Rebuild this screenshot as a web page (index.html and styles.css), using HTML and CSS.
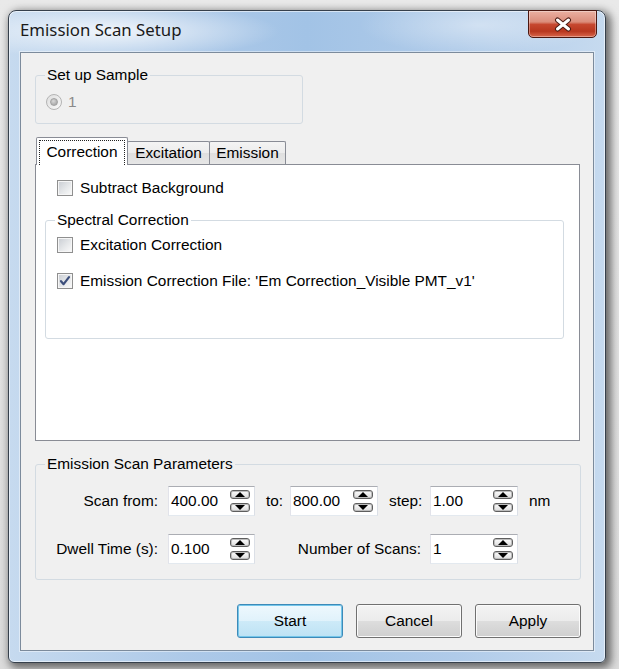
FILE: index.html
```html
<!DOCTYPE html>
<html lang="en">
<head>
<meta charset="utf-8">
<title>Emission Scan Setup</title>
<link rel="stylesheet" href="styles.css">
</head>
<body>
<div class="window">
  <div class="titlebar">
    <span class="title">Emission Scan Setup</span>
    <div class="close-btn">
      <svg width="20" height="15" viewBox="0 0 20 15"><path d="M4.5 3 L15.5 12 M15.5 3 L4.5 12" stroke="#4a1a12" stroke-width="5" stroke-linecap="round"/><path d="M4.5 3 L15.5 12 M15.5 3 L4.5 12" stroke="#ffffff" stroke-width="3" stroke-linecap="round"/></svg>
    </div>
  </div>
  <div class="client">
    <fieldset class="group group-sample">
      <legend>Set up Sample</legend>
      <div class="option disabled"><span class="radio"><span class="radio-dot"></span></span><span>1</span></div>
    </fieldset>

    <div class="tabs">
      <div class="tabstrip">
        <div class="tab tab-active"><span class="focus-rect">Correction</span></div>
        <div class="tab tab-exc">Excitation</div>
        <div class="tab tab-em">Emission</div>
      </div>
      <div class="tabpanel">
        <div class="option option-top"><span class="checkbox"></span><span>Subtract Background</span></div>
        <fieldset class="group group-spectral">
          <legend>Spectral Correction</legend>
          <div class="option"><span class="checkbox"></span><span>Excitation Correction</span></div>
          <div class="option option-gap"><span class="checkbox"><svg width="14" height="14" viewBox="0 0 14 14"><path d="M3 7.2 L5.6 10.2 L11 3.2" fill="none" stroke="#3d4f7c" stroke-width="2.2" stroke-linecap="round" stroke-linejoin="round"/></svg></span><span>Emission Correction File: 'Em Correction_Visible PMT_v1'</span></div>
        </fieldset>
      </div>
    </div>

    <fieldset class="group group-params">
      <legend>Emission Scan Parameters</legend>
      <div class="param-grid">
        <span class="lbl lbl-first">Scan from:</span>
        <div class="spin"><span class="spin-value">400.00</span><span class="spin-buttons"><span class="spin-btn"><span class="tri-up"></span></span><span class="spin-btn"><span class="tri-down"></span></span></span></div>
        <span class="lbl lbl-mid">to:</span>
        <div class="spin"><span class="spin-value">800.00</span><span class="spin-buttons"><span class="spin-btn"><span class="tri-up"></span></span><span class="spin-btn"><span class="tri-down"></span></span></span></div>
        <span class="lbl lbl-mid">step:</span>
        <div class="spin"><span class="spin-value">1.00</span><span class="spin-buttons"><span class="spin-btn"><span class="tri-up"></span></span><span class="spin-btn"><span class="tri-down"></span></span></span></div>
        <span class="lbl lbl-mid">nm</span>

        <span class="lbl lbl-first">Dwell Time (s):</span>
        <div class="spin"><span class="spin-value">0.100</span><span class="spin-buttons"><span class="spin-btn"><span class="tri-up"></span></span><span class="spin-btn"><span class="tri-down"></span></span></span></div>
        <span class="lbl lbl-span">Number of Scans:</span>
        <div class="spin spin-last"><span class="spin-value">1</span><span class="spin-buttons"><span class="spin-btn"><span class="tri-up"></span></span><span class="spin-btn"><span class="tri-down"></span></span></span></div>
      </div>
    </fieldset>

    <div class="buttons">
      <button class="btn btn-default">Start</button>
      <button class="btn">Cancel</button>
      <button class="btn">Apply</button>
    </div>
  </div>
</div>
</body>
</html>
```

FILE: styles.css
```css
* { box-sizing: border-box; }
html, body { margin: 0; padding: 0; }
body {
  width: 619px;
  height: 669px;
  overflow: hidden;
  padding: 10px 0 0 8px;
  background: linear-gradient(180deg, #e9e9e9 0%, #dcdcdc 100%);
  font-family: "Liberation Sans", Arial, sans-serif;
  font-size: 15.4px;
  color: #000;
}

.window {
  width: 598px;
  height: 653px;
  border: 1px solid #36404c;
  border-radius: 8px 8px 6px 6px;
  padding: 0 11px 11px 11px;
  display: flex;
  flex-direction: column;
  background:
    radial-gradient(ellipse 170px 28px at 100px 20px, rgba(255,255,255,0.8), rgba(255,255,255,0) 100%),
    radial-gradient(ellipse 120px 30px at 470px 14px, rgba(255,255,255,0.4), rgba(255,255,255,0) 100%),
    linear-gradient(90deg, #c6daef 0%, #adc9e8 30%, #a2c3e6 50%, #b0cbe9 75%, #c6daef 100%);
  box-shadow: 3px 3px 8px 2px rgba(0,0,0,0.55), inset 0 0 0 1px rgba(255,255,255,0.55);
}

.titlebar {
  height: 41px;
  display: flex;
  align-items: flex-start;
}
.title {
  font-family: "Noto Sans", "Open Sans", sans-serif;
  font-size: 16.8px;
  line-height: 22px;
  margin-top: 8px;
  color: #1a1a1a;
}
.close-btn {
  width: 69px;
  height: 28px;
  margin: -1px -3px 0 auto;
  border: 1px solid #4b1710;
  border-radius: 0 0 5px 5px;
  background: linear-gradient(180deg, #eab0a2 0%, #db8d7b 42%, #c6472f 52%, #b8371f 78%, #d9674c 100%);
  box-shadow: inset 0 0 0 1px rgba(255,255,255,0.35);
  display: flex;
  align-items: center;
  justify-content: center;
}

.client {
  flex: 1;
  background: #f0f0f0;
  border: 1px solid #7c8b9c;
  box-shadow: 0 0 0 1px rgba(255,255,255,0.45);
  padding: 0 12px 12px 14px;
  display: flex;
  flex-direction: column;
}

/* group boxes */
.group {
  margin: 0;
  min-width: 0;
  border: 1px solid #d3dbe2;
  border-radius: 3px;
}
.group legend {
  line-height: 18px;
  padding: 0 2px;
}
.group-sample {
  width: 268px;
  margin-top: 13px;
  padding: 9px 10px 12px 10px;
}
.group-sample legend { margin-left: -1px; }

.option {
  display: flex;
  align-items: center;
  gap: 7px;
  height: 18px;
  line-height: 18px;
  white-space: nowrap;
}
.option.disabled { color: #8a8a8a; gap: 6px; }

.radio {
  width: 16px;
  height: 16px;
  border-radius: 50%;
  border: 1px solid #b4b4b4;
  background: linear-gradient(135deg, #dedede, #fafafa);
  display: flex;
  align-items: center;
  justify-content: center;
}
.radio-dot {
  width: 8px;
  height: 8px;
  border-radius: 50%;
  background: radial-gradient(circle at 40% 35%, #d8d8d8, #9a9a9a);
  border: 1px solid #a2a2a2;
}

.checkbox {
  width: 16px;
  height: 16px;
  flex: none;
  border: 1px solid #8f8f8f;
  background: linear-gradient(135deg, #c8ccd2 0%, #e6e8ea 55%, #fbfbfb 100%);
  box-shadow: inset 0 0 0 1px #f6f6f6;
  display: flex;
  align-items: center;
  justify-content: center;
}

/* tabs */
.tabs {
  margin-top: 13px;
  margin-right: 1px;
  display: flex;
  flex-direction: column;
}
.tabstrip {
  display: flex;
  align-items: flex-end;
  height: 27px;
  padding-left: 1px;
}
.tab {
  height: 23px;
  line-height: 21px;
  text-align: center;
  border: 1px solid #898c95;
  border-bottom: none;
  border-radius: 2px 2px 0 0;
  background: linear-gradient(180deg, #f4f4f4 0%, #ececec 50%, #dfdfdf 51%, #e6e6e6 100%);
  margin-left: -1px;
}
.tab-active {
  position: relative;
  z-index: 1;
  width: 92px;
  height: 28px;
  margin-left: 0;
  margin-bottom: -1px;
  background: #fff;
  padding: 2px 2px 0 2px;
}
.focus-rect {
  display: block;
  height: 25px;
  line-height: 22px;
  border: 1px dotted #222;
  border-bottom: none;
}
.tab-exc { width: 83px; }
.tab-em { width: 77px; }

.tabpanel {
  height: 277px;
  background: #fff;
  border: 1px solid #898c95;
  padding: 14px 15px 0 9px;
}
.option-top { margin-left: 12px; }
.group-spectral {
  margin-top: 14px;
  padding: 7px 11px 48px 11px;
}
.group-spectral legend { margin-left: -2px; }
.option-gap { margin-top: 18px; }

/* params */
.group-params {
  margin-top: 14px;
  padding: 13px 0 15px 0;
}
.group-params legend { margin-left: 9px; }
.param-grid {
  display: grid;
  grid-template-columns: 132px 87px 35px 88px 52px 88px auto;
  row-gap: 18px;
  align-items: center;
}
.lbl { white-space: nowrap; line-height: 18px; }
.lbl-first { text-align: right; padding-right: 10px; }
.lbl-mid { padding-left: 11px; }
.lbl-span { grid-column: 3 / 6; text-align: right; padding-right: 9px; }
.spin-last { grid-column: 6; }

.spin {
  height: 30px;
  background: #fff;
  border: 1px solid;
  border-color: #abadb3 #dbdfe6 #e3e9ef #e2e3ea;
  display: flex;
  align-items: center;
  justify-content: space-between;
  padding: 0 4px 0 2px;
}
.spin-value { line-height: 18px; }
.spin-buttons {
  display: flex;
  flex-direction: column;
  gap: 4px;
}
.spin-btn {
  width: 20px;
  height: 9px;
  border: 1px solid #5e5e5e;
  border-radius: 3px;
  background: linear-gradient(180deg, #fdfdfd, #dcdcdc);
  box-shadow: inset 0 0 0 1px #bdbdbd;
  display: flex;
  align-items: center;
  justify-content: center;
}
.tri-up {
  width: 0; height: 0;
  border-left: 5px solid transparent;
  border-right: 5px solid transparent;
  border-bottom: 5px solid #000;
}
.tri-down {
  width: 0; height: 0;
  border-left: 5px solid transparent;
  border-right: 5px solid transparent;
  border-top: 5px solid #000;
}

/* buttons */
.buttons {
  margin-top: 24px;
  display: flex;
  justify-content: flex-end;
  gap: 13px;
}
.btn {
  width: 106px;
  height: 34px;
  padding: 0;
  font: inherit;
  color: #000;
  border: 1px solid #707070;
  border-radius: 3px;
  background: linear-gradient(180deg, #f3f3f3 0%, #ebebeb 50%, #dddddd 51%, #cfcfcf 100%);
  box-shadow: inset 0 0 0 1px #fbfbfb;
}
.btn-default {
  border-color: #3d8ab8;
  background: linear-gradient(180deg, #eef8fd 0%, #e0f2fb 50%, #cdeaf8 51%, #bde2f4 100%);
  box-shadow: inset 0 0 0 1px #74c6ea;
}
```
